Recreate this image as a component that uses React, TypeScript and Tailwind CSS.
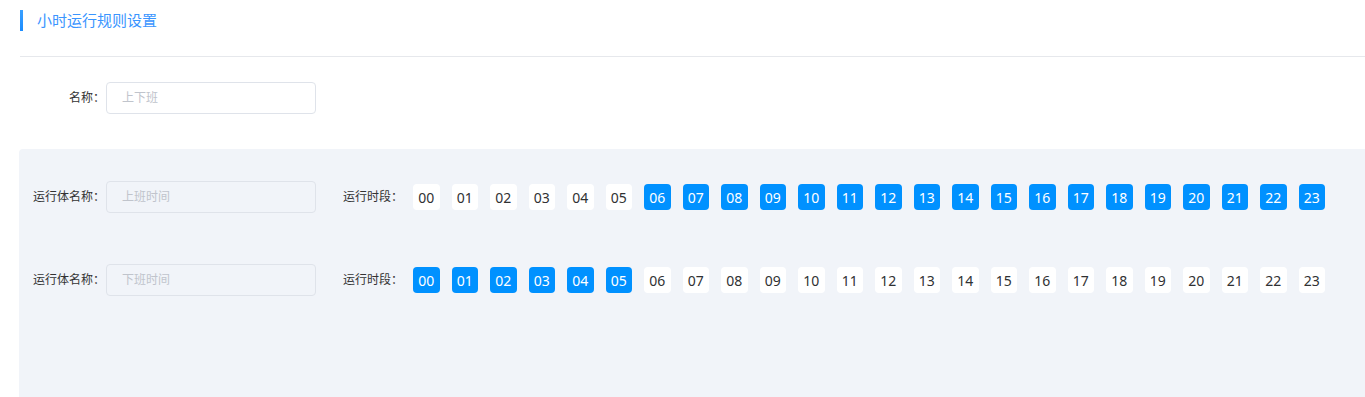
import React from "react";

const hours = Array.from({ length: 24 }, (_, i) => String(i).padStart(2, "0"));

function Chips({ active }: { active: (h: number) => boolean }) {
  return (
    <div className="flex gap-[12px]">
      {hours.map((h, i) => (
        <div
          key={h}
          className={
            "w-[26.5px] h-[26px] rounded-[4px] flex items-center justify-center text-[14px] " +
            (active(i) ? "bg-[#0091ff] text-white" : "bg-white text-[#303133]")
          }
        >
          {h}
        </div>
      ))}
    </div>
  );
}

function RunRow({ placeholder, active }: { placeholder: string; active: (h: number) => boolean }) {
  return (
    <div className="flex items-center h-[32px]">
      <div className="w-[87px] pr-[1px] text-right text-[12px] text-[#333]">运行体名称：</div>
      <div className="w-[210px] h-[32px] border border-[#dfe3ea] rounded-[4px] flex items-center pl-[15px] text-[12px] text-[#c0c4cc]">
        {placeholder}
      </div>
      <div className="w-[97px] pr-[10px] text-right text-[12px] text-[#333]">运行时段：</div>
      <Chips active={active} />
    </div>
  );
}

export default function App() {
  return (
    <div
      className="w-full h-[397px] overflow-hidden bg-white pl-[20px]"
      style={{ fontFamily: '"Noto Sans", "Noto Sans CJK SC", sans-serif' }}
    >
      <div className="h-[56px] pt-[10px] flex items-start">
        <div className="w-[3px] h-[21px] bg-gradient-to-b from-[#3aa0ff] to-[#1a8cff]" />
        <div className="ml-[14px] leading-[21px] text-[15px] text-[#3a95ff]">小时运行规则设置</div>
      </div>
      <div className="border-t border-[#e6e8ec]" />
      <div className="mt-[25px] flex items-center h-[32px]">
        <div className="w-[86px] pr-[1px] text-right text-[12px] text-[#333]">名称：</div>
        <div className="w-[210px] h-[32px] bg-white border border-[#dfe3ea] rounded-[4px] flex items-center pl-[15px] text-[12px] text-[#c0c4cc]">
          上下班
        </div>
      </div>
      <div className="mt-[35px] -ml-[1px] bg-[#f1f4f9] rounded-tl-[4px] h-[260px] pt-[32px] flex flex-col gap-[51px]">
        <RunRow placeholder="上班时间" active={(i) => i >= 6} />
        <RunRow placeholder="下班时间" active={(i) => i < 6} />
      </div>
    </div>
  );
}
